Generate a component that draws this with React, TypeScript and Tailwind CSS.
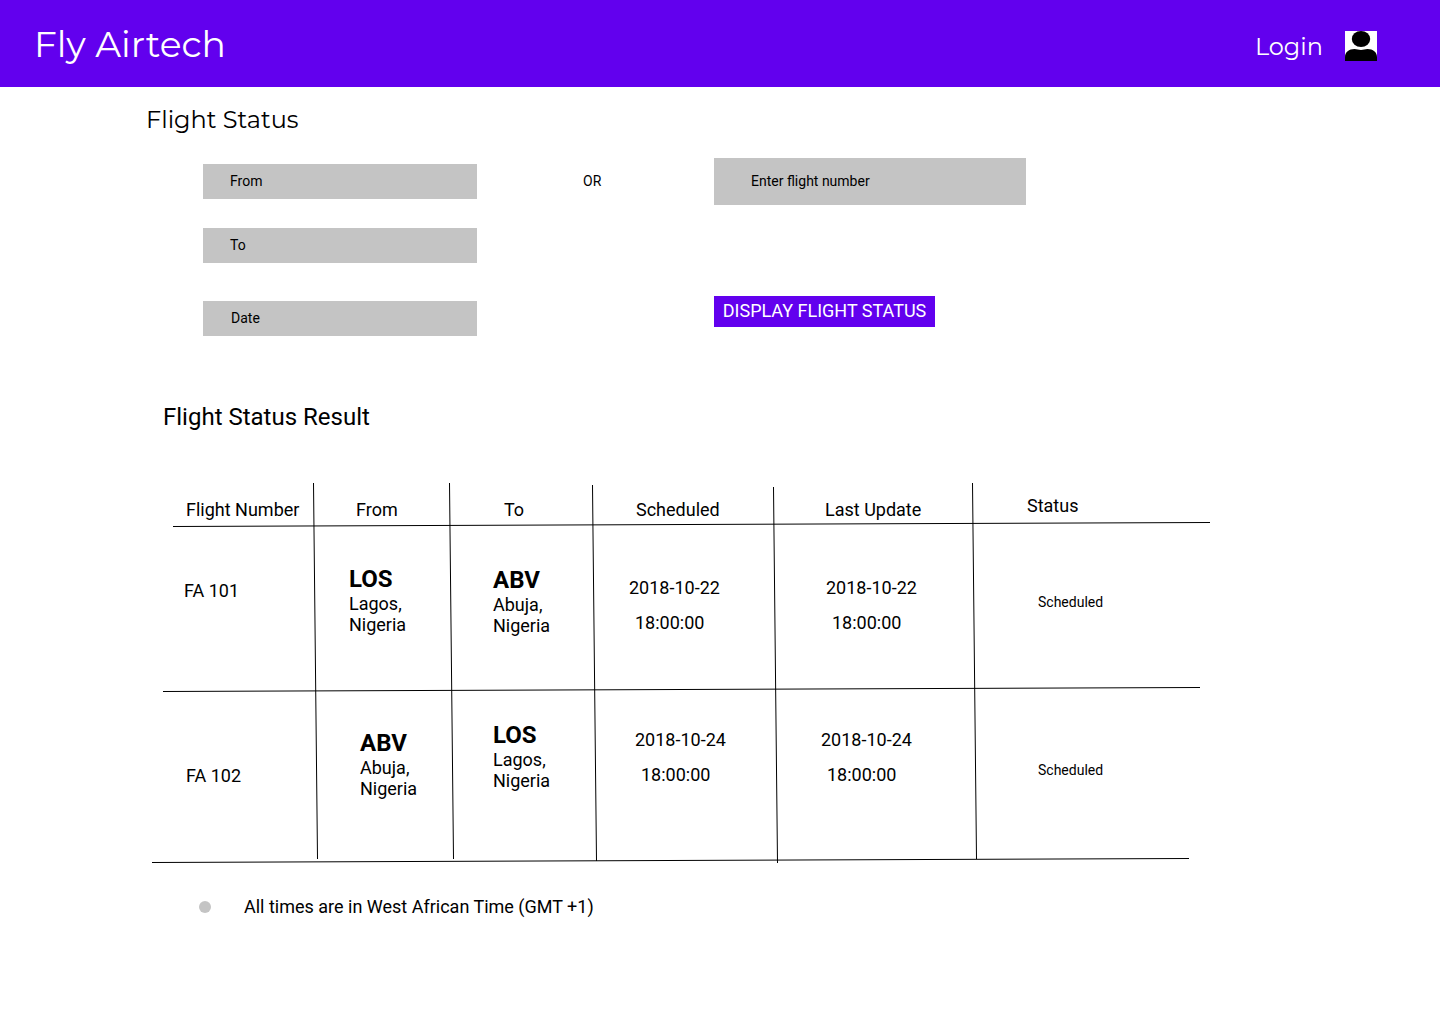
import React from "react";

const horizontalLines = [
  [21, 43.5, 1058, 39.5],
  [11, 208.5, 1048, 204.5],
  [0, 379.5, 1037, 375.5],
];

const verticalLines = [
  [161.5, 0, 165.5, 376],
  [297.5, 0, 301.5, 376],
  [440.5, 2, 444.5, 378],
  [621.5, 4, 625.5, 380],
  [820.5, 0, 824.5, 376],
];

function TableLines() {
  return (
    <svg className="pointer-events-none absolute left-0 top-0" width="1058" height="381" viewBox="0 0 1058 381" fill="none" stroke="#000" strokeWidth="1">
      {[...horizontalLines, ...verticalLines].map(([x1, y1, x2, y2], i) => (
        <line key={i} x1={x1} y1={y1} x2={x2} y2={y2} />
      ))}
    </svg>
  );
}

function Airport({ code, city, className }: { code: string; city: string; className: string }) {
  return (
    <div className={className}>
      <div className="text-[24px] font-bold leading-[28px]">{code}</div>
      <div>{city},</div>
      <div>Nigeria</div>
    </div>
  );
}

function Time({ date, className }: { date: string; className: string }) {
  return (
    <div className={className}>
      <div>{date}</div>
      <div className="pl-1.5 pt-[14px]">18:00:00</div>
    </div>
  );
}

function UserIcon() {
  return (
    <svg className="bg-white" width="32" height="30" viewBox="0 0 32 30">
      <ellipse cx="16" cy="8" rx="9.2" ry="8" fill="#000" />
      <path d="M0 30V26C0 21 4 18 9.5 18C12 18 13.500 19 16 19C18.500 19 20 18 22.500 18C28 18 32 21 32 26V30Z" fill="#000" />
    </svg>
  );
}

export default function App() {
  return (
    <div className="h-[1024px] w-[1440px] overflow-hidden bg-white font-['Roboto',sans-serif] text-[18px] leading-[21px] text-black">
      <header className="flex h-[87px] items-start justify-between bg-[#6200ee] pl-[34px] pr-[63px] font-['Montserrat','Inter',sans-serif] text-white">
        <div className="whitespace-nowrap pt-[22px] text-[36px] leading-[44px]">Fly Airtech</div>
        <div className="flex items-start">
          <div className="mr-[22px] whitespace-nowrap pt-[32px] text-[24px] leading-[29px]">Login</div>
          <div className="pt-[31px]"><UserIcon /></div>
        </div>
      </header>

      <h1 className="ml-[146px] h-[71px] whitespace-nowrap pt-[18px] font-['Montserrat','Inter',sans-serif] text-[24px] leading-[29px]">Flight Status</h1>

      <section className="ml-[203px] flex h-[178px] items-start text-[14px] leading-[16px]">
        <div className="w-[274px] pt-[6px]">
          <div className="h-[35px] bg-[#c4c4c4] pl-[27px] pt-[9px]">From</div>
          <div className="mt-[29px] h-[35px] bg-[#c4c4c4] pl-[27px] pt-[9px]">To</div>
          <div className="mt-[38px] h-[35px] bg-[#c4c4c4] pl-[28px] pt-[9px]">Date</div>
        </div>
        <div className="w-[237px] pl-[106px] pt-[15px]">OR</div>
        <div>
          <div className="h-[47px] w-[312px] bg-[#c4c4c4] pl-[37px] pt-[15px]">Enter flight number</div>
          <button className="mt-[91px] block h-[31px] w-[221px] whitespace-nowrap bg-[#6200ee] pb-[2px] text-center text-[18px] leading-[21px] text-white">DISPLAY FLIGHT STATUS</button>
        </div>
      </section>

      <h2 className="ml-[163px] h-[147px] pt-[67px] text-[24px] leading-[28px]">Flight Status Result</h2>

      <section className="relative ml-[152px] w-[1058px]">
        <TableLines />
        <div className="grid h-[42px] grid-cols-[162px_136px_143px_181px_199px_237px] whitespace-nowrap pt-4">
          <div className="pl-[34px]">Flight Number</div>
          <div className="pl-[42px]">From</div>
          <div className="pl-[54px]">To</div>
          <div className="pl-[43px]">Scheduled</div>
          <div className="pl-[51px]">Last Update</div>
          <div className="-mt-1 pl-[54px]">Status</div>
        </div>
        <div className="grid h-[165px] grid-cols-[162px_136px_143px_181px_199px_237px]">
          <div className="pl-[32px] pt-[55px]">FA 101</div>
          <Airport code="LOS" city="Lagos" className="pl-[35px] pt-[40px]" />
          <Airport code="ABV" city="Abuja" className="pl-[43px] pt-[41px]" />
          <Time date="2018-10-22" className="pl-[36px] pt-[52px]" />
          <Time date="2018-10-22" className="pl-[52px] pt-[52px]" />
          <div className="pl-[65px] pt-[69px] text-[14px] leading-[16px]">Scheduled</div>
        </div>
        <div className="grid h-[174px] grid-cols-[162px_136px_143px_181px_199px_237px]">
          <div className="pl-[34px] pt-[75px]">FA 102</div>
          <Airport code="ABV" city="Abuja" className="pl-[46px] pt-[39px]" />
          <Airport code="LOS" city="Lagos" className="pl-[43px] pt-[31px]" />
          <Time date="2018-10-24" className="pl-[42px] pt-[39px]" />
          <Time date="2018-10-24" className="pl-[47px] pt-[39px]" />
          <div className="pl-[65px] pt-[72px] text-[14px] leading-[16px]">Scheduled</div>
        </div>
      </section>

      <footer className="ml-[199px] flex items-center gap-[33px] pt-[32px]">
        <span className="size-3 rounded-full bg-[#c4c4c4]" />
        <span>All times are in West African Time (GMT +1)</span>
      </footer>
    </div>
  );
}
